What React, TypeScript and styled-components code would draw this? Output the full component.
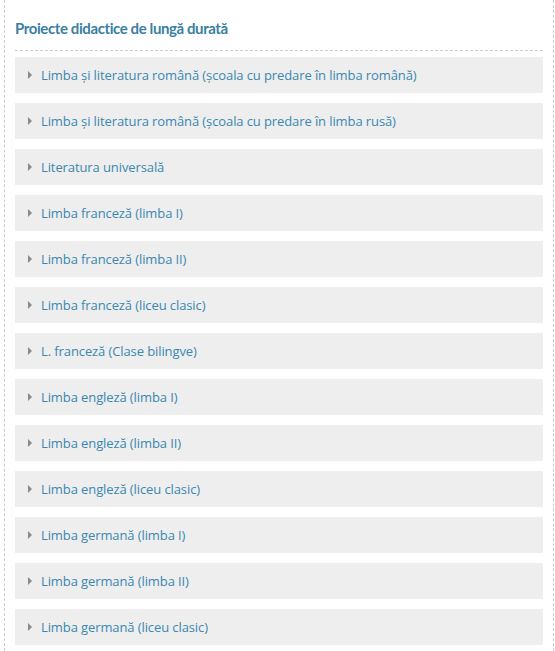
import React from "react";
import styled, { createGlobalStyle } from "styled-components";

const Global = createGlobalStyle`
  html, body { margin: 0; padding: 0; background: #ffffff; }
  body { font-family: "Open Sans", "Noto Sans", sans-serif; }
`;

const Panel = styled.div`
  margin-left: 4px;
  width: 528px;
  padding: 0 10px;
  border-left: 1px dashed #cccccc;
  border-right: 1px dashed #cccccc;
  min-height: 651px;
  box-sizing: content-box;
`;

const Title = styled.h2`
  margin: 0;
  padding-top: 17px;
  padding-bottom: 11px;
  border-bottom: 1px dashed #cccccc;
  font-family: Lato, "Open Sans", sans-serif;
  font-size: 15px;
  font-weight: 700;
  line-height: 22px;
  color: #3a80a2;
  letter-spacing: -0.4px;
`;

const List = styled.ul`
  list-style: none;
  margin: 6px 0 0;
  padding: 0;
  display: flex;
  flex-direction: column;
  gap: 10px;
`;

const Row = styled.li`
  height: 36px;
  background: #eeeeee;
  display: flex;
  align-items: center;
  padding-left: 13px;
  gap: 9px;
  font-size: 13px;
  color: #3a88b0;
  letter-spacing: -0.1px;
`;

const Caret = styled.span`
  width: 0;
  height: 0;
  border-top: 4px solid transparent;
  border-bottom: 4px solid transparent;
  border-left: 4px solid #8a8a8a;
`;

const items = [
  "Limba și literatura română (școala cu predare în limba română)",
  "Limba și literatura română (școala cu predare în limba rusă)",
  "Literatura universală",
  "Limba franceză (limba I)",
  "Limba franceză (limba II)",
  "Limba franceză (liceu clasic)",
  "L. franceză (Clase bilingve)",
  "Limba engleză (limba I)",
  "Limba engleză (limba II)",
  "Limba engleză (liceu clasic)",
  "Limba germană (limba I)",
  "Limba germană (limba II)",
  "Limba germană (liceu clasic)",
];

export default function App() {
  return (
    <>
      <Global />
      <Panel>
        <Title>Proiecte didactice de lungă durată</Title>
        <List>
          {items.map((t) => (
            <Row key={t}>
              <Caret />
              {t}
            </Row>
          ))}
        </List>
      </Panel>
    </>
  );
}
